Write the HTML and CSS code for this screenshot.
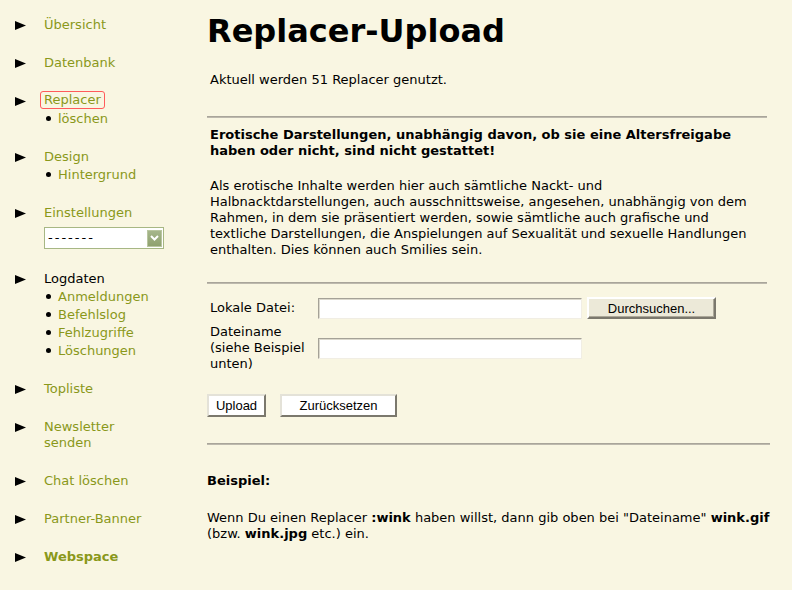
FILE: index.html
```html
<!DOCTYPE html>
<html lang="de">
<head>
<meta charset="utf-8">
<title>Replacer-Upload</title>
<link rel="stylesheet" href="styles.css">
</head>
<body>
<aside class="nav">
  <div class="group">
    <svg class="arrow" width="11" height="9" viewBox="0 0 11 9"><polygon points="0,0 11,4.5 0,9"/></svg>
    <div class="body"><div class="title"><a href="#">Übersicht</a></div></div>
  </div>
  <div class="group">
    <svg class="arrow" width="11" height="9" viewBox="0 0 11 9"><polygon points="0,0 11,4.5 0,9"/></svg>
    <div class="body"><div class="title"><a href="#">Datenbank</a></div></div>
  </div>
  <div class="group">
    <svg class="arrow" width="11" height="9" viewBox="0 0 11 9"><polygon points="0,0 11,4.5 0,9"/></svg>
    <div class="body">
      <div class="title"><a href="#" class="focused">Replacer</a></div>
      <ul class="sub"><li><a href="#">löschen</a></li></ul>
    </div>
  </div>
  <div class="group">
    <svg class="arrow" width="11" height="9" viewBox="0 0 11 9"><polygon points="0,0 11,4.5 0,9"/></svg>
    <div class="body">
      <div class="title"><a href="#">Design</a></div>
      <ul class="sub"><li><a href="#">Hintergrund</a></li></ul>
    </div>
  </div>
  <div class="group">
    <svg class="arrow" width="11" height="9" viewBox="0 0 11 9"><polygon points="0,0 11,4.5 0,9"/></svg>
    <div class="body">
      <div class="title"><a href="#">Einstellungen</a></div>
      <div class="select">
        <span class="select-value">-------</span>
        <span class="select-btn"><svg width="9" height="6" viewBox="0 0 9 6"><polyline points="1,1 4.5,4.5 8,1" fill="none" stroke="#fff" stroke-width="2"/></svg></span>
      </div>
    </div>
  </div>
  <div class="group">
    <svg class="arrow" width="11" height="9" viewBox="0 0 11 9"><polygon points="0,0 11,4.5 0,9"/></svg>
    <div class="body">
      <div class="title plain">Logdaten</div>
      <ul class="sub">
        <li><a href="#">Anmeldungen</a></li>
        <li><a href="#">Befehlslog</a></li>
        <li><a href="#">Fehlzugriffe</a></li>
        <li><a href="#">Löschungen</a></li>
      </ul>
    </div>
  </div>
  <div class="group">
    <svg class="arrow" width="11" height="9" viewBox="0 0 11 9"><polygon points="0,0 11,4.5 0,9"/></svg>
    <div class="body"><div class="title"><a href="#">Topliste</a></div></div>
  </div>
  <div class="group">
    <svg class="arrow" width="11" height="9" viewBox="0 0 11 9"><polygon points="0,0 11,4.5 0,9"/></svg>
    <div class="body"><div class="title two"><a href="#">Newsletter<br>senden</a></div></div>
  </div>
  <div class="group">
    <svg class="arrow" width="11" height="9" viewBox="0 0 11 9"><polygon points="0,0 11,4.5 0,9"/></svg>
    <div class="body"><div class="title"><a href="#">Chat löschen</a></div></div>
  </div>
  <div class="group">
    <svg class="arrow" width="11" height="9" viewBox="0 0 11 9"><polygon points="0,0 11,4.5 0,9"/></svg>
    <div class="body"><div class="title"><a href="#">Partner-Banner</a></div></div>
  </div>
  <div class="group">
    <svg class="arrow" width="11" height="9" viewBox="0 0 11 9"><polygon points="0,0 11,4.5 0,9"/></svg>
    <div class="body"><div class="title"><a href="#" class="strong">Webspace</a></div></div>
  </div>
</aside>

<main class="content">
  <h1 class="page-title">Replacer-Upload</h1>
  <p class="count">Aktuell werden 51 Replacer genutzt.</p>
  <hr class="rule">
  <p class="warning">Erotische Darstellungen, unabhängig davon, ob sie eine Altersfreigabe<br>haben oder nicht, sind nicht gestattet!</p>
  <p class="info">Als erotische Inhalte werden hier auch sämtliche Nackt- und<br>Halbnacktdarstellungen, auch ausschnittsweise, angesehen, unabhängig von dem<br>Rahmen, in dem sie präsentiert werden, sowie sämtliche auch grafische und<br>textliche Darstellungen, die Anspielungen auf Sexualität und sexuelle Handlungen<br>enthalten. Dies können auch Smilies sein.</p>
  <hr class="rule rule-form">
  <form class="upload">
    <div class="field">
      <label class="label">Lokale Datei:</label>
      <span class="input"></span>
      <span class="btn btn-browse">Durchsuchen...</span>
    </div>
    <div class="field">
      <label class="label">Dateiname<br>(siehe Beispiel<br>unten)</label>
      <span class="input"></span>
    </div>
    <div class="actions">
      <span class="btn btn-upload">Upload</span>
      <span class="btn btn-reset">Zurücksetzen</span>
    </div>
  </form>
  <hr class="rule rule-wide">
  <p class="example-title">Beispiel:</p>
  <p class="example">Wenn Du einen Replacer <b>:wink</b> haben willst, dann gib oben bei "Dateiname" <b>wink.gif</b><br>(bzw. <b>wink.jpg</b> etc.) ein.</p>
</main>
</body>
</html>
```
FILE: styles.css
```css
html, body {
  margin: 0;
  padding: 0;
}
body {
  background: #f9f6e2;
  color: #000;
  font-family: "DejaVu Sans", Verdana, sans-serif;
  font-size: 13px;
  display: flex;
  align-items: flex-start;
  min-height: 590px;
}
a {
  color: #8a981a;
  text-decoration: none;
}

/* navigation */
.nav {
  width: 207px;
  flex: none;
  box-sizing: border-box;
  padding: 16px 0 0 15px;
}
.group {
  display: flex;
  align-items: flex-start;
  margin-bottom: 20px;
}
.arrow {
  flex: none;
  margin-top: 5px;
  margin-right: 18px;
  fill: #000;
}
.title {
  line-height: 18px;
  white-space: nowrap;
}
.title.two {
  line-height: 16px;
  padding: 1px 0;
}
.title.plain {
  color: #000;
}
.focused {
  display: inline-block;
  vertical-align: top;
  height: 16px;
  line-height: 16px;
  padding: 0 3px;
  margin-left: -4px;
  margin-top: -1px;
  border: 1px solid #ff5b5b;
  border-radius: 3px;
}
.strong {
  font-weight: bold;
}
.sub {
  list-style: none;
  margin: 0;
  padding: 0 0 0 2px;
}
.sub li {
  display: flex;
  align-items: center;
  line-height: 18px;
  white-space: nowrap;
}
.sub li::before {
  content: "";
  width: 5px;
  height: 5px;
  border-radius: 50%;
  background: #000;
  margin-right: 7px;
  margin-top: -1px;
}
.select {
  margin: 5px 0 1px;
  width: 120px;
  height: 22px;
  box-sizing: border-box;
  border: 1px solid #a7b784;
  background: #fff;
  display: flex;
  align-items: center;
  justify-content: space-between;
  padding: 0 1px 0 3px;
}
.select-value {
  letter-spacing: 2px;
  line-height: 16px;
  font-size: 13px;
}
.select-btn {
  width: 15px;
  height: 17px;
  box-sizing: border-box;
  border: 1px solid #b9c6a0;
  background: linear-gradient(#a6b68b, #8fa16f);
  display: flex;
  align-items: center;
  justify-content: center;
}

/* content */
.content {
  width: 563px;
  flex: none;
  padding-top: 12px;
}
.page-title {
  margin: 0;
  font-size: 32px;
  line-height: 38px;
  font-weight: bold;
}
.content p {
  line-height: 16px;
  white-space: nowrap;
}
.count {
  margin: 22px 0 0 3px;
}
.rule {
  width: 560px;
  margin: 28px 0 0 0;
  height: 0;
  border: 0;
  border-top: 1px solid #a9a59a;
  border-bottom: 1px solid #bdb9ad;
}
.warning {
  margin: 9px 0 0 3px;
  font-weight: bold;
}
.info {
  margin: 19px 0 0 3px;
}
.rule-form {
  margin-top: 24px;
}
.upload {
  margin-top: 13px;
}
.field {
  display: flex;
  align-items: center;
  padding-left: 3px;
  margin-bottom: 5px;
}
.label {
  width: 108px;
  line-height: 16px;
  flex: none;
}
.input {
  width: 264px;
  height: 21px;
  box-sizing: border-box;
  background: #fff;
  border: 1px solid;
  border-color: #a5a297 #f1eee4 #f1eee4 #a5a297;
  box-shadow: inset 1px 1px 0 #dcd9cd;
}
.btn {
  font-family: "Liberation Sans", Arial, sans-serif;
  font-size: 13px;
  box-sizing: border-box;
  display: inline-flex;
  align-items: center;
  justify-content: center;
  border: 2px solid;
  border-color: #fff #7b786d #7b786d #fff;
  box-shadow: inset -1px -1px 0 #aca899;
}
.btn-browse {
  margin-left: 5px;
  width: 129px;
  height: 22px;
  background: #ece9d8;
}
.actions {
  display: flex;
  margin-top: 22px;
}
.btn-upload, .btn-reset {
  height: 23px;
  background: #fff;
  border-color: #e4e2d8 #7b786d #7b786d #e4e2d8;
  box-shadow: none;
}
.btn-upload {
  width: 59px;
}
.btn-reset {
  width: 117px;
  margin-left: 14px;
}
.rule-wide {
  width: 563px;
  margin-top: 26px;
}
.example-title {
  margin: 28px 0 0;
  font-weight: bold;
}
.example {
  margin: 21px 0 0;
}
```
